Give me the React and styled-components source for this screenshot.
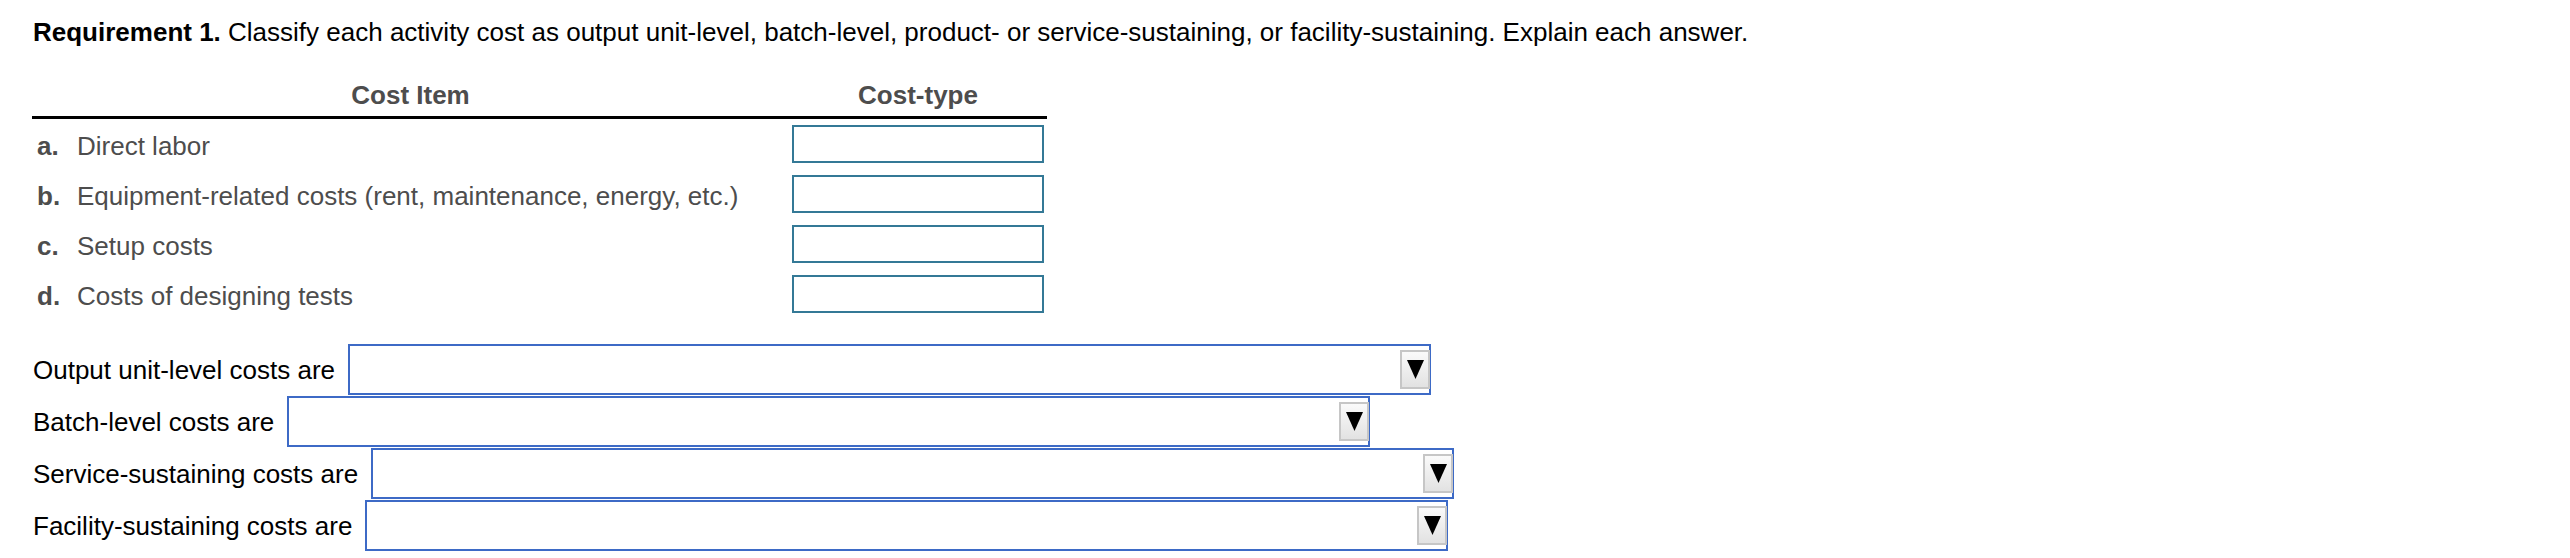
import { styled, createGlobalStyle } from "styled-components";

const GlobalStyle = createGlobalStyle`
  html, body {
    margin: 0;
    padding: 0;
    background: #fff;
  }
  body {
    font-family: "Liberation Sans", Arial, sans-serif;
  }
`;

const costItems = [
  { key: "a.", label: "Direct labor" },
  { key: "b.", label: "Equipment-related costs (rent, maintenance, energy, etc.)" },
  { key: "c.", label: "Setup costs" },
  { key: "d.", label: "Costs of designing tests" },
];

const answers = [
  "Output unit-level costs are",
  "Batch-level costs are",
  "Service-sustaining costs are",
  "Facility-sustaining costs are",
];

const Page = () => {
  return (
    <Wrapper>
      <Heading>
        <strong>Requirement 1.</strong> Classify each activity cost as output
        unit-level, batch-level, product- or service-sustaining, or
        facility-sustaining. Explain each answer.
      </Heading>

      <CostTable>
        <thead>
          <tr>
            <HeadCell $width={757}>Cost Item</HeadCell>
            <HeadCell $width={258}>Cost-type</HeadCell>
          </tr>
        </thead>
        <tbody>
          {costItems.map((item) => (
            <tr key={item.key}>
              <ItemCell>
                <Letter>{item.key}</Letter>
                {item.label}
              </ItemCell>
              <InputCell>
                <AnswerBox type="text" />
              </InputCell>
            </tr>
          ))}
        </tbody>
      </CostTable>

      <Answers>
        {answers.map((text) => (
          <AnswerRow key={text}>
            <AnswerLabel>{text}</AnswerLabel>
            <Dropdown>
              <ArrowButton>
                <svg width="17" height="19" viewBox="0 0 17 19">
                  <polygon points="0,0 17,0 8.5,19" fill="#000" />
                </svg>
              </ArrowButton>
            </Dropdown>
          </AnswerRow>
        ))}
      </Answers>
    </Wrapper>
  );
};

export default function App() {
  return (
    <>
      <GlobalStyle />
      <Page />
    </>
  );
}

const Wrapper = styled.div`
  padding: 17px 0 0 33px;
  font-size: 26px;
  line-height: 30px;
`;

const Heading = styled.p`
  margin: 0;
  color: #000;
  strong {
    font-weight: bold;
  }
`;

const CostTable = styled.table`
  margin-top: 33px;
  margin-left: -1px;
  border-collapse: collapse;
  border-spacing: 0;
`;

const HeadCell = styled.th`
  width: ${(p) => p.$width}px;
  padding: 0 0 6px;
  text-align: center;
  font-weight: bold;
  color: #4d4d4d;
  border-bottom: 3px solid #000;
`;

const ItemCell = styled.td`
  padding: 3px 0 0 5px;
  height: 47px;
  color: #4d4d4d;
  vertical-align: middle;
`;

const Letter = styled.span`
  display: inline-block;
  width: 40px;
  font-weight: bold;
`;

const InputCell = styled.td`
  padding: 6px 0;
  text-align: center;
  vertical-align: middle;
`;

const AnswerBox = styled.input`
  display: block;
  box-sizing: border-box;
  margin: 0 auto;
  width: 252px;
  height: 38px;
  border: 2px solid #347996;
  border-radius: 0;
  background: #fff;
  outline: none;
`;

const Answers = styled.div`
  margin-top: 25px;
  display: flex;
  flex-direction: column;
  gap: 1px;
`;

const AnswerRow = styled.div`
  display: flex;
  align-items: center;
  gap: 13px;
`;

const AnswerLabel = styled.span`
  color: #000;
  white-space: nowrap;
`;

const Dropdown = styled.div`
  box-sizing: border-box;
  width: 1083px;
  height: 51px;
  border: 2px solid #3d6ac6;
  background: #fff;
  display: flex;
  justify-content: flex-end;
  align-items: center;
`;

const ArrowButton = styled.div`
  box-sizing: border-box;
  width: 30px;
  height: 39px;
  margin-right: -1px;
  border: 2px solid #c6c6c6;
  background: linear-gradient(#fafafa, #e2e2e2);
  display: flex;
  align-items: center;
  justify-content: center;
`;
